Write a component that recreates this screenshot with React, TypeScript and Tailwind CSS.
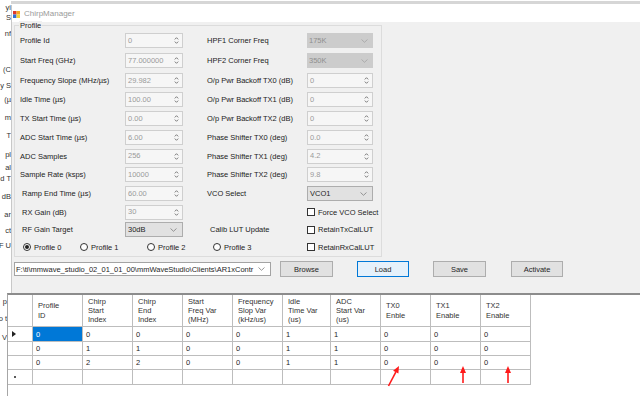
import React from 'react'

const FONT = "font-['Liberation_Sans',Arial,sans-serif]"

function SpinArrows() {
    return (
        <svg width="5" height="9" viewBox="0 0 5 9" className="mr-[3px] shrink-0">
            <polyline points="0.8,3.4 2.5,1.7 4.2,3.4" fill="none" stroke="#6b6b6b" strokeWidth="0.9" />
            <polyline points="0.8,5.6 2.5,7.3 4.2,5.6" fill="none" stroke="#6b6b6b" strokeWidth="0.9" />
        </svg>
    )
}

function Chevron({ color = '#8a8a8a' }: { color?: string }) {
    return (
        <svg width="7" height="4" viewBox="0 0 7 4" className="mr-[5px] shrink-0">
            <polyline points="0.5,0.5 3.5,3.3 6.5,0.5" fill="none" stroke={color} strokeWidth="0.9" />
        </svg>
    )
}

function Spin({ value, w = 'w-[58px]' }: { value: string; w?: string }) {
    return (
        <div className={`${w} h-[15px] flex items-center border border-[#cfcfcf] bg-[#f6f6f6]`}>
            <span className="flex-1 pl-[2px] text-[#9a9a9a] leading-none">{value}</span>
            <SpinArrows />
        </div>
    )
}

function Combo({ value, disabled, w = 'w-[66px]' }: { value: string; disabled?: boolean; w?: string }) {
    if (disabled) {
        return (
            <div className={`${w} h-[15px] flex items-center bg-[#cccccc]`}>
                <span className="flex-1 pl-[2px] text-[#8f8f8f] leading-none">{value}</span>
                <Chevron color="#a8a8a8" />
            </div>
        )
    }
    return (
        <div className={`${w} h-[15px] flex items-center border border-[#adadad] bg-[#e1e1e1]`}>
            <span className="flex-1 pl-[2px] text-[#1e1e1e] leading-none">{value}</span>
            <Chevron />
        </div>
    )
}

function Check({ label }: { label: string }) {
    return (
        <div className="flex items-center">
            <span className="w-[8px] h-[8px] border border-[#333] bg-white shrink-0" />
            <span className="ml-[3px] whitespace-nowrap">{label}</span>
        </div>
    )
}

function Radio({ label, checked, w }: { label: string; checked?: boolean; w: string }) {
    return (
        <div className={`${w} flex items-center shrink-0`}>
            <span className="w-[8px] h-[8px] rounded-full border border-[#333] bg-white flex items-center justify-center shrink-0">
                {checked && <span className="w-[4px] h-[4px] rounded-full bg-[#222]" />}
            </span>
            <span className="ml-[3px] whitespace-nowrap">{label}</span>
        </div>
    )
}

type Row = {
    h: string
    label?: string
    labelIndent?: string
    left?: React.ReactNode
    rLabel?: string
    rIndent?: string
    right?: React.ReactNode
}

const ROWS: Row[] = [
    { h: 'h-[19px]', label: 'Profile Id', left: <Spin value="0" />, rLabel: 'HPF1 Corner Freq', right: <Combo value="175K" disabled /> },
    { h: 'h-[21px]', label: 'Start Freq (GHz)', left: <Spin value="77.000000" />, rLabel: 'HPF2 Corner Freq', right: <Combo value="350K" disabled /> },
    { h: 'h-[19px]', label: 'Frequency Slope (MHz/µs)', left: <Spin value="29.982" />, rLabel: 'O/p Pwr Backoff TX0 (dB)', right: <Spin value="0" w="w-[66px]" /> },
    { h: 'h-[19px]', label: 'Idle Time (µs)', left: <Spin value="100.00" />, rLabel: 'O/p Pwr Backoff TX1 (dB)', right: <Spin value="0" w="w-[66px]" /> },
    { h: 'h-[19px]', label: 'TX Start Time (µs)', left: <Spin value="0.00" />, rLabel: 'O/p Pwr Backoff TX2 (dB)', right: <Spin value="0" w="w-[66px]" /> },
    { h: 'h-[19px]', label: 'ADC Start Time (µs)', left: <Spin value="6.00" />, rLabel: 'Phase Shifter TX0 (deg)', right: <Spin value="0.0" w="w-[66px]" /> },
    { h: 'h-[18px]', label: 'ADC Samples', left: <Spin value="256" />, rLabel: 'Phase Shifter TX1 (deg)', right: <Spin value="4.2" w="w-[66px]" /> },
    { h: 'h-[19px]', label: 'Sample Rate (ksps)', left: <Spin value="10000" />, rLabel: 'Phase Shifter TX2 (deg)', right: <Spin value="9.8" w="w-[66px]" /> },
    { h: 'h-[19px]', label: 'Ramp End Time (µs)', labelIndent: 'pl-[2px]', left: <Spin value="60.00" />, rLabel: 'VCO Select', right: <Combo value="VCO1" /> },
    { h: 'h-[18px]', label: 'RX Gain (dB)', labelIndent: 'pl-[2px]', left: <Spin value="30" />, rLabel: '', right: <Check label="Force VCO Select" /> },
    { h: 'h-[17px]', label: 'RF Gain Target', labelIndent: 'pl-[2px]', left: <Combo value="30dB" w="w-[58px]" />, rLabel: 'Calib LUT Update', rIndent: 'pl-[3px]', right: <Check label="RetainTxCalLUT" /> },
]

const HEADERS = [
    'Profile\nID',
    'Chirp\nStart\nIndex',
    'Chirp\nEnd\nIndex',
    'Start\nFreq Var\n(MHz)',
    'Frequency\nSlop Var\n(kHz/us)',
    'Idle\nTime Var\n(us)',
    'ADC\nStart Var\n(us)',
    'TX0\nEnble',
    'TX1\nEnable',
    'TX2\nEnable',
]
const COL_W = ['w-[50px]', 'w-[50px]', 'w-[50px]', 'w-[50px]', 'w-[50px]', 'w-[48px]', 'w-[50px]', 'w-[50px]', 'w-[50px]', 'w-[50px]']

const DATA = [
    ['0', '0', '0', '0', '0', '1', '1', '0', '0', '0'],
    ['0', '1', '1', '0', '0', '1', '1', '0', '0', '0'],
    ['0', '2', '2', '0', '0', '1', '1', '0', '0', '0'],
]
const ROW_H = ['h-[15px]', 'h-[14px]', 'h-[14px]', 'h-[15px]']

// fragments of the window that lies behind
const BEHIND_TOP = [
    { t: 'yi', c: 'top-[3px]' },
    { t: 'S', c: 'top-[13px]' },
    { t: 'nf', c: 'top-[29px]' },
    { t: '(C', c: 'top-[65px]' },
    { t: 'y S', c: 'top-[81px]' },
    { t: '(µ', c: 'top-[95px]' },
    { t: 'm', c: 'top-[113px]' },
    { t: 'T', c: 'top-[131px]' },
    { t: 'pl', c: 'top-[150px]' },
    { t: 'al', c: 'top-[163px]' },
    { t: 'd T', c: 'top-[174px]' },
    { t: 'dB', c: 'top-[192px]' },
    { t: 'ar', c: 'top-[210px]' },
    { t: 'ct', c: 'top-[226px]' },
    { t: 'F U', c: 'top-[241px]' },
]
const BEHIND_BOTTOM = [
    { t: 'p', c: 'top-[4px]' },
    { t: 'o t', c: 'top-[21px]' },
    { t: 'V', c: 'top-[40px]' },
]

export default function App() {
    return (
        <div className={`relative w-[640px] h-[396px] overflow-hidden bg-white text-[7.5px] leading-[9px] text-[#222] ${FONT}`}>
            {/* window behind, only its right edge shows */}
            <div className="absolute left-0 top-0 w-[11px] h-[293px] overflow-hidden">
                {BEHIND_TOP.map((b) => (
                    <div key={b.c} className={`absolute right-0 ${b.c} whitespace-nowrap text-[#333]`}>
                        {b.t}
                    </div>
                ))}
            </div>
            <div className="absolute left-0 top-[293px] w-[7px] h-[103px] overflow-hidden">
                {BEHIND_BOTTOM.map((b) => (
                    <div key={b.c} className={`absolute right-0 ${b.c} whitespace-nowrap text-[#333]`}>
                        {b.t}
                    </div>
                ))}
            </div>
            <div className="absolute left-[11px] right-0 top-[1px] h-[3px] bg-[#d6d6d6]" />

            {/* ChirpManager window */}
            <div className="absolute left-[11px] right-0 top-[5px] h-[288px] flex flex-col border-l border-[#c8c8c8] bg-[#f0f0f0]">
                <div className="h-[17px] bg-white flex items-center shrink-0">
                    <svg width="7" height="7" viewBox="0 0 7 7" className="ml-[1px] mt-[1px]">
                        <rect x="0" y="0" width="3.5" height="3.5" fill="#e0392b" />
                        <rect x="3.5" y="0" width="3.5" height="3.5" fill="#f5a623" />
                        <rect x="0" y="3.5" width="3.5" height="3.5" fill="#2f6fd6" />
                        <rect x="3.5" y="3.5" width="3.5" height="3.5" fill="#f3d23b" />
                    </svg>
                    <span className="ml-[4px] text-[8px] text-[#9a9a9a]">ChirpManager</span>
                </div>

                <div className="pl-[2px] pt-[3px]">
                    {/* Profile group box */}
                    <div className="relative w-[368px] h-[232px] border border-[#dcdcdc] pl-[5px] pt-[5px]">
                        <span className="absolute left-[4px] top-[-5px] px-[1px] bg-[#f0f0f0]">Profile</span>

                        {ROWS.map((r, i) => (
                            <div key={i} className={`${r.h} flex items-center`}>
                                <div className={`w-[105px] ${r.labelIndent ?? ''} whitespace-nowrap`}>{r.label}</div>
                                {r.left}
                                <div className={`ml-[24px] w-[100px] ${r.rIndent ?? ''} whitespace-nowrap`}>{r.rLabel}</div>
                                {r.right}
                            </div>
                        ))}

                        <div className="h-[18px] flex items-center">
                            <div className="w-[287px] flex items-center pl-[3px]">
                                <Radio label="Profile 0" checked w="w-[57px]" />
                                <Radio label="Profile 1" w="w-[67px]" />
                                <Radio label="Profile 2" w="w-[66px]" />
                                <Radio label="Profile 3" w="w-[60px]" />
                            </div>
                            <Check label="RetainRxCalLUT" />
                        </div>
                    </div>

                    {/* path + buttons */}
                    <div className="mt-[4px] flex items-center h-[16px]">
                        <div className="w-[257px] h-[14px] flex items-center border border-[#a3a3a3] bg-white">
                            <span className="flex-1 pl-[1px] whitespace-nowrap overflow-hidden text-[#1e1e1e]">
                                F:\ti\mmwave_studio_02_01_01_00\mmWaveStudio\Clients\AR1xContr
                            </span>
                            <Chevron />
                        </div>
                        <button className="ml-[9px] w-[53px] h-[16px] border border-[#adadad] bg-[#e1e1e1] text-[#1e1e1e]">Browse</button>
                        <button className="ml-[24px] w-[52px] h-[16px] border border-[#0078d7] bg-[#e5f1fb] text-[#1e1e1e]">Load</button>
                        <button className="ml-[24px] w-[53px] h-[16px] border border-[#adadad] bg-[#e1e1e1] text-[#1e1e1e]">Save</button>
                        <button className="ml-[25px] w-[52px] h-[16px] border border-[#adadad] bg-[#e1e1e1] text-[#1e1e1e]">Activate</button>
                    </div>
                </div>
            </div>

            {/* data grid */}
            <div className="absolute left-[7px] right-0 top-[293px] bottom-0 border-t-2 border-t-[#8c8c8c] border-l border-l-[#a6a6a6] bg-white">
                <div className="flex h-[32px]">
                    <div className="w-[25px] border-r border-b border-[#bdbdbd]" />
                    {HEADERS.map((h, i) => (
                        <div
                            key={i}
                            className={`${COL_W[i]} border-r border-b border-[#bdbdbd] flex items-center pl-[5px] whitespace-pre-line leading-[9.3px] text-[#333]`}
                        >
                            {h}
                        </div>
                    ))}
                </div>
                {[...DATA, null].map((row, ri) => (
                    <div key={ri} className={`flex ${ROW_H[ri]}`}>
                        <div className="w-[25px] border-r border-b border-[#bdbdbd] flex items-center pl-[3px]">
                            {ri === 0 && (
                                <svg width="4" height="6" viewBox="0 0 4 6" className="ml-[1px]">
                                    <polygon points="0,0 4,3 0,6" fill="#222" />
                                </svg>
                            )}
                            {row === null && <span className="ml-[3px] w-[2px] h-[2px] bg-[#222] rounded-full" />}
                        </div>
                        {COL_W.map((w, ci) => {
                            const sel = ri === 0 && ci === 0
                            return (
                                <div
                                    key={ci}
                                    className={`${w} border-r border-b border-[#bdbdbd] flex items-center pl-[3px] ${
                                        sel ? 'bg-[#0078d7] text-white' : 'text-[#1e1e1e]'
                                    }`}
                                >
                                    {row ? row[ci] : ''}
                                </div>
                            )
                        })}
                    </div>
                ))}
            </div>

            {/* red annotation arrows */}
            <svg className="absolute left-0 top-0 pointer-events-none" width="640" height="396" viewBox="0 0 640 396">
                <line x1="388.5" y1="386" x2="395.8" y2="372.2" stroke="#ff1a1a" strokeWidth="1.6" />
                <polygon points="399,366 398.4,373.6 393.1,370.8" fill="#ff1a1a" />
                <line x1="463" y1="383" x2="463" y2="372" stroke="#ff1a1a" strokeWidth="1.6" />
                <polygon points="463,366 460,373 466,373" fill="#ff1a1a" />
                <line x1="508" y1="383" x2="508" y2="372" stroke="#ff1a1a" strokeWidth="1.6" />
                <polygon points="508,366 505,373 511,373" fill="#ff1a1a" />
            </svg>
        </div>
    )
}
